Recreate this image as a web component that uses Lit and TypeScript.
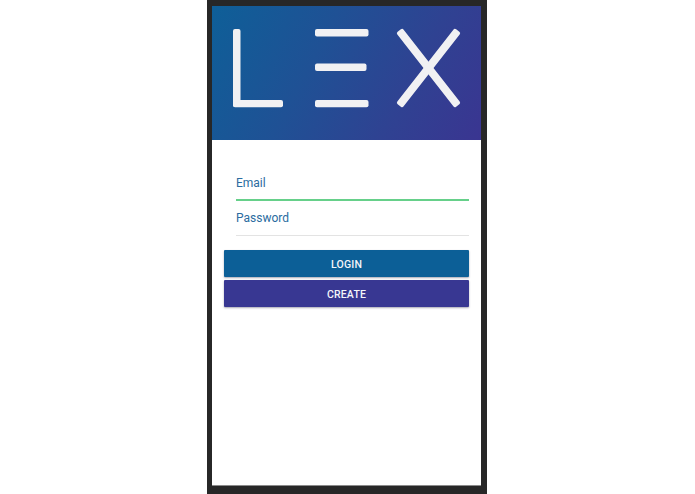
import { LitElement, html, css } from "lit";
import { customElement } from "lit/decorators.js";

@customElement("app-root")
export class AppRoot extends LitElement {
  static styles = css`
    :host {
      display: block;
      width: 695px;
      height: 494px;
      background: #ffffff;
      font-family: Roboto, "Liberation Sans", sans-serif;
      overflow: hidden;
    }
    .page {
      display: flex;
      justify-content: flex-start;
      padding-left: 207px;
      height: 494px;
      box-sizing: border-box;
    }
    .phone {
      width: 280px;
      height: 494px;
      box-sizing: border-box;
      background: #272727;
      padding: 6px 6px 9px 5px;
    }
    .screen {
      height: 479px;
      background: #ffffff;
      display: flex;
      flex-direction: column;
      box-shadow: 0 1px 0 0 #8a8a8a;
    }
    .hero {
      height: 134px;
      flex: none;
      background: linear-gradient(118deg, #0e5f98 0%, #1f5195 38%, #2f4292 70%, #3a3591 100%);
    }
    .hero svg {
      display: block;
    }
    .logo-bar {
      fill: #f1f1f3;
    }
    .form {
      display: flex;
      flex-direction: column;
      padding: 26px 12px 0 12px;
    }
    .field {
      margin-left: 12px;
      height: 35px;
      box-sizing: border-box;
      display: flex;
      align-items: flex-end;
      padding-bottom: 9px;
      color: #2a6ca0;
      font-size: 12px;
      line-height: 16px;
      border-bottom: 1px solid #e3e3e3;
    }
    .field.focus {
      border-bottom: 2px solid #66d08a;
      padding-bottom: 8px;
    }
    .buttons {
      display: flex;
      flex-direction: column;
      gap: 3px;
      margin-top: 14px;
    }
    .btn {
      height: 27px;
      box-sizing: border-box;
      padding-top: 1px;
      display: flex;
      align-items: center;
      justify-content: center;
      color: #f4f5fa;
      font-size: 10.5px;
      font-weight: 500;
      letter-spacing: 0.2px;
      border-radius: 1px;
      box-shadow: 0 1px 2px rgba(40, 40, 70, 0.4);
    }
    .login {
      background: #0c5f97;
    }
    .create {
      background: #383792;
    }
  `;

  render() {
    return html`
      <div class="page">
        <div class="phone">
          <div class="screen">
            <div class="hero">
              <svg width="269" height="134" viewBox="212 6 269 134" role="img" aria-label="LEX">
                <rect class="logo-bar" x="233" y="29" width="7.5" height="78" rx="2" />
                <rect class="logo-bar" x="233" y="100" width="50" height="7.2" rx="2" />
                <rect class="logo-bar" x="315" y="29" width="53.5" height="7.4" rx="2" />
                <rect class="logo-bar" x="315" y="63.5" width="51.5" height="7.4" rx="2" />
                <rect class="logo-bar" x="315" y="100" width="53.5" height="7.2" rx="2" />
                <rect class="logo-bar" x="381" y="64" width="95" height="8" rx="2" transform="rotate(52 428.5 68)" />
                <rect class="logo-bar" x="381" y="64" width="95" height="8" rx="2" transform="rotate(-52 428.5 68)" />
              </svg>
            </div>
            <div class="form">
              <div class="field focus">Email</div>
              <div class="field">Password</div>
              <div class="buttons">
                <div class="btn login">LOGIN</div>
                <div class="btn create">CREATE</div>
              </div>
            </div>
          </div>
        </div>
      </div>
    `;
  }
}
